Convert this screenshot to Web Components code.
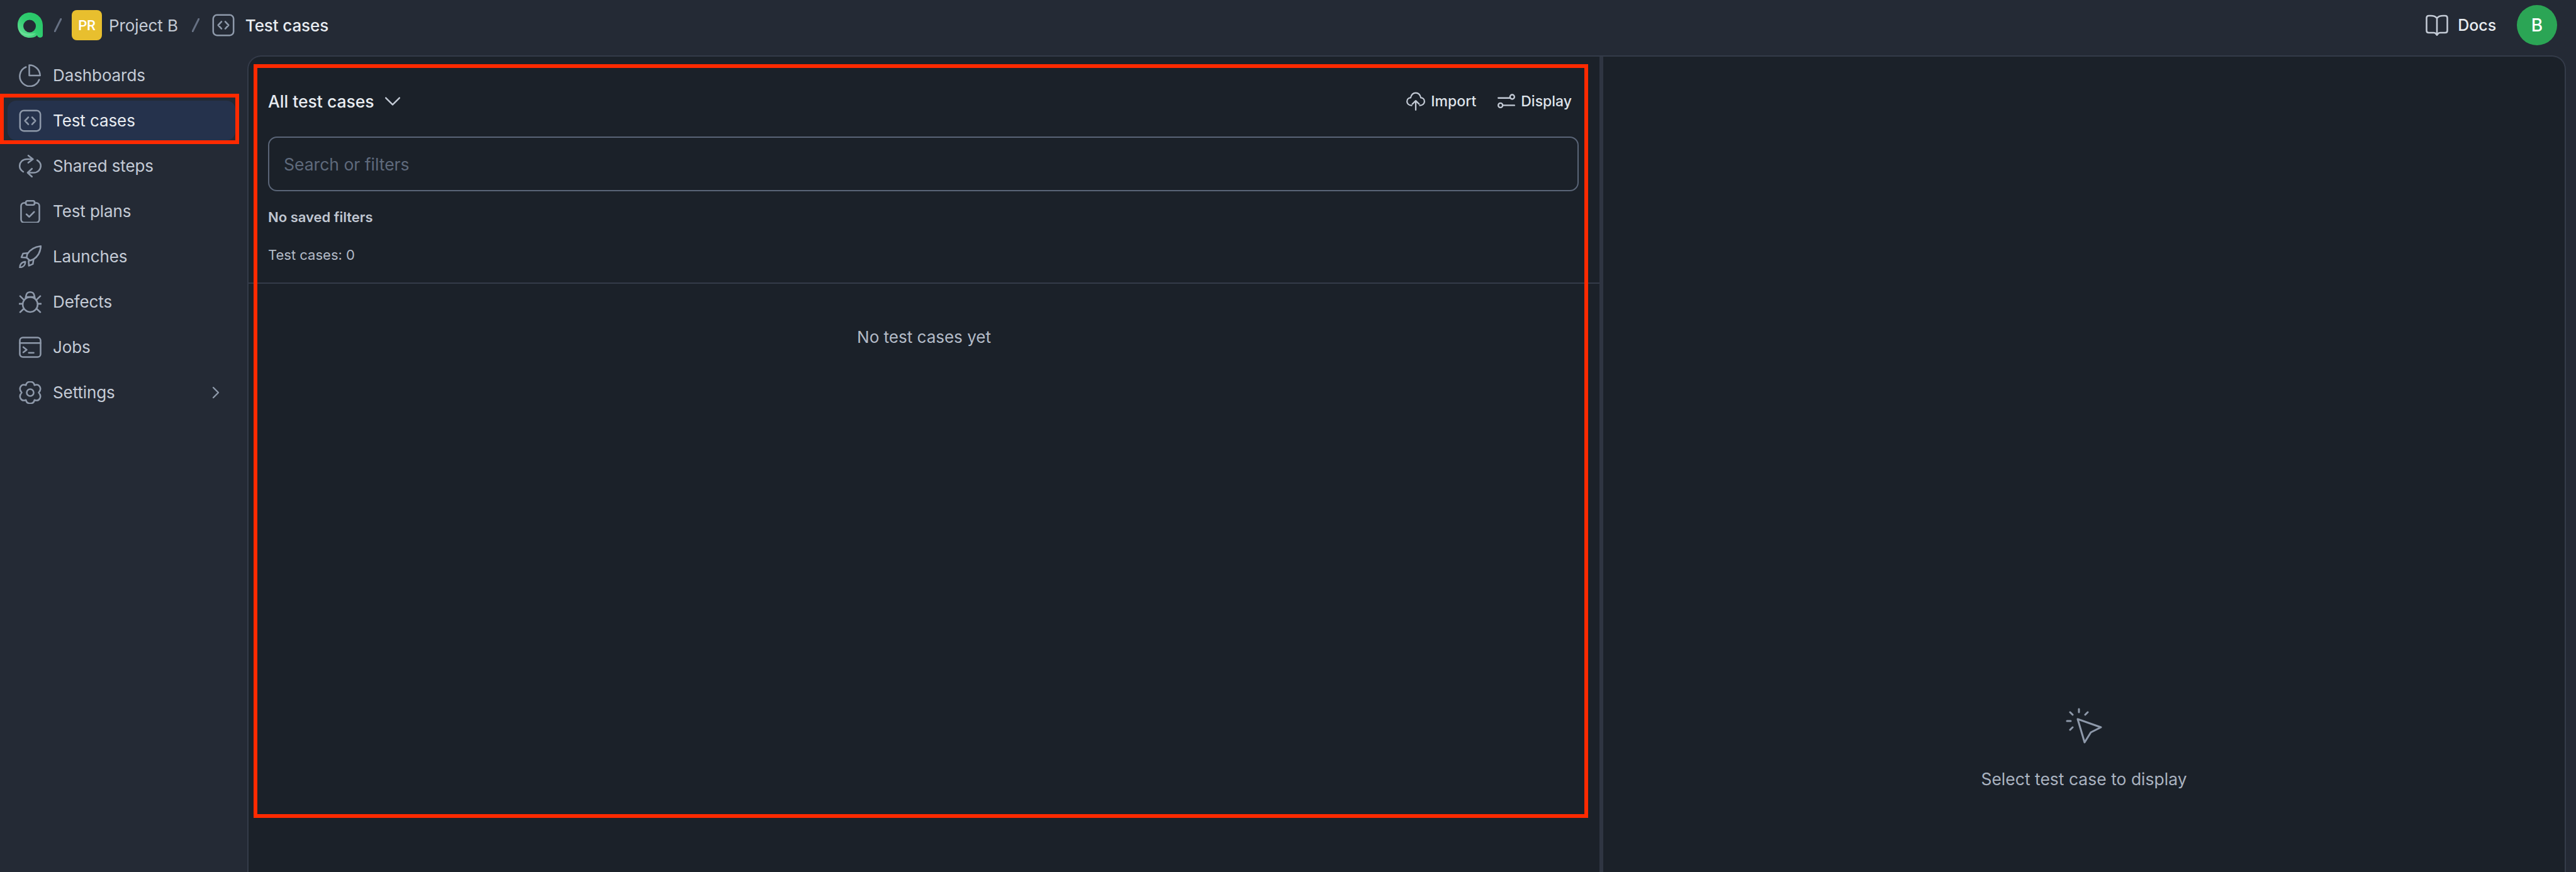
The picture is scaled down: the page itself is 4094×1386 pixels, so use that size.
<!DOCTYPE html>
<html lang="en">
<head>
<meta charset="utf-8">
<title>Test cases</title>
<style>
    html, body { margin: 0; height: 100%; background: #242a35; overflow: hidden; }
    body { font-family: Inter, "Noto Sans", sans-serif; }
</style>
</head>
<body>
<app-shell>
    <top-bar slot="top"></top-bar>
    <side-nav slot="side"></side-nav>
    <list-pane slot="list"></list-pane>
    <detail-pane slot="detail"></detail-pane>
</app-shell>

<script>
const ICONS = {
    code: '<rect x="1.2" y="1.2" width="21.6" height="21.6" rx="4"/><path d="M10 8.3 6.5 12l3.5 3.7M14 8.3l3.5 3.7-3.5 3.7"/>',
    pie: '<path d="M11 1v11h11.5A11.5 11.5 0 0 0 11 1z"/><path d="M7.5 3A10.6 10.6 0 1 0 21.5 16.5"/>',
    steps: '<path d="M10 .8l4.9 3.8L10 8.4"/><path d="M14.6 4.6H8.5C4 4.6.8 7.8.8 12c0 2.4 1.3 4.5 3.8 6"/><path d="M13.8 14.8 9.3 19l4.5 4.2"/><path d="M9.6 19h6c4.4 0 7.6-3.1 7.6-7.3 0-2.4-1.3-4.4-3.8-5.9"/>',
    clipboard: '<path d="M7.5 3H5.5a3.2 3.2 0 0 0-3.2 3.2v14.4A3.2 3.2 0 0 0 5.5 23.8h13a3.2 3.2 0 0 0 3.2-3.2V6.2A3.2 3.2 0 0 0 18.5 3h-2"/><rect x="7.3" y=".8" width="9.4" height="4.4" rx="1.8"/><path d="M8 15l3 2.8 5.2-5.3"/>',
    rocket: '<path d="M23.3.8C16.5 1.5 12.2 4 8.8 9.3L8.2 13l3.6 3.2 3.8-1.5C20.5 11.5 22.8 7 23.3.8z"/><path d="M9 8.2 4.4 8.7 2.7 12.6l5.3.4"/><path d="M15.6 14.7 14.8 19.8 10.6 21.6 10.3 16.5"/><path d="M1 23.5C.9 20.2 3 17.5 6.8 17.3 7 20.5 4.8 23 1 23.5z"/>',
    bug: '<circle cx="12" cy="14.7" r="7.9"/><path d="M6.9 8.5 7.7 5a4.4 4.4 0 0 1 8.6 0l.8 3.5"/><path d="M7.5 6.7h9"/><path d="M.5 13.9h3.5M20 13.9h3.5M1.3 5.8l3.7 3.6M22.7 5.8 19 9.4M1.3 22.8 5 19.3M22.7 22.8 19 19.3"/>',
    terminal: '<rect x="1" y="1.7" width="22" height="20.6" rx="3.2"/><path d="M1 7.5h22"/><path d="M4.7 11.8 8.3 14.6 4.7 17.4"/><path d="M10.5 17.8h5.2"/>',
    gear: '<path d="M7.5 4.2C8 1 10 .5 12 .5s4 .5 4.5 3.7C19.5 3 21.2 4 22.2 5.8s1.300 3.500-1.200 6.200c2.500 2.700 2.200 4.400 1.200 6.200s-2.700 2.800-5.700 1.600C16 23 14 23.500 12 23.500s-4-.5-4.500-3.700C4.500 21 2.800 20 1.800 18.200S.5 14.700 3 12C.5 9.300.8 7.600 1.800 5.800S4.500 3 7.500 4.200z"/><circle cx="12" cy="12" r="3.7"/>',
    right: '<path d="M8 4l8 8-8 8"/>',
    down: '<path d="M2 7l10 10L22 7"/>',
    cloud: '<path d="M6.8 17.3C3.3 17.3.9 15 .9 12.200c0-2.600 2-4.600 4.600-4.700C6.300 3.700 8.800 1.200 12 1.200s5.700 2.500 6.500 6.300c2.600.1 4.600 2.100 4.600 4.700 0 2.800-2.400 5.100-5.900 5.100"/><path d="M12 23V11.5M7.7 15.5 12 11.3l4.300 4.200"/>',
    sliders: '<path d="M1 7.5h16.5"/><circle cx="20" cy="6" r="3"/><circle cx="4" cy="17.5" r="3"/><path d="M7 17.5h16"/>',
    book: '<path d="M12 4.6C10.5 2.7 8.500 2 5.500 2H3.400C2 2 1 3 1 4.400v13.200C1 19 2 20 3.400 20H8.500c1.200 0 2 .5 2.400 1.200l1.100 1.300 1.100-1.300c.4-.7 1.200-1.200 2.400-1.200h5.100C22 20 23 19 23 17.600V4.400C23 3 22 2 20.600 2H18.500c-3 0-5 .7-6.500 2.600zM12 4.600V21"/>'
};

class UiIcon extends HTMLElement {
    constructor() {
        super();
        const size = this.getAttribute('size') || 36;
        const stroke = this.getAttribute('stroke') || 1.7;
        this.attachShadow({ mode: 'open' });
        this.shadowRoot.innerHTML = `
            <style>
                :host { display: inline-flex; flex: none; width: ${size}px; height: ${size}px; color: #8e99aa; }
                svg { width: 100%; height: 100%; }
            </style>
            <svg viewBox="0 0 24 24" fill="none" stroke="currentColor" stroke-width="${stroke}"
                stroke-linecap="round" stroke-linejoin="round">${ICONS[this.getAttribute('name')] || ''}</svg>
        `;
    }
}

// red annotation frame drawn on top of the screenshot
class MarkBox extends HTMLElement {
    constructor() {
        super();
        this.attachShadow({ mode: 'open' });
        this.shadowRoot.innerHTML = `
            <style>
                :host {
                    position: absolute;
                    box-sizing: border-box;
                    border: 6px solid #ff2a00;
                    pointer-events: none;
                }
            </style>
        `;
    }
}

class AppShell extends HTMLElement {
    constructor() {
        super();
        this.attachShadow({ mode: 'open' });
        this.shadowRoot.innerHTML = `
            <style>
                :host {
                    display: grid;
                    position: relative;
                    height: 100vh;
                    grid-template-columns: 393px 1fr;
                    grid-template-rows: 88px 1fr;
                }
                .top { grid-column: 1 / 3; }
                .panel {
                    display: grid;
                    grid-template-columns: 2153px 1fr;
                    margin-right: 16px;
                    min-height: 0;
                    background: #1b2129;
                    border: 2px solid #343b49;
                    border-bottom: none;
                    border-radius: 22px 22px 0 0;
                }
                .list { border-right: 6px solid #2f3542; min-width: 0; }
                .frame-nav { left: 0; top: 149px; width: 380px; height: 80px; }
                .frame-list { left: 403px; top: 102px; width: 2121px; height: 1198px; }
            </style>
            <div class="top"><slot name="top"></slot></div>
            <div><slot name="side"></slot></div>
            <div class="panel">
                <div class="list"><slot name="list"></slot></div>
                <slot name="detail"></slot>
            </div>
            <mark-box class="frame-nav"></mark-box>
            <mark-box class="frame-list"></mark-box>
        `;
    }
}

class TopBar extends HTMLElement {
    constructor() {
        super();
        this.attachShadow({ mode: 'open' });
        this.shadowRoot.innerHTML = `
            <style>
                :host {
                    display: flex;
                    align-items: center;
                    height: 80px;
                    padding: 0 30px 8px 28px;
                    font-size: 26px;
                    letter-spacing: -.1px;
                    color: #c4cbd6;
                }
                .logo { width: 40px; height: 40px; flex: none; }
                .slash { width: 12px; height: 22px; flex: none; margin: 0 16px 0 18px; }
                .slash.second { margin-right: 20px; }
                .badge {
                    display: flex;
                    align-items: center;
                    justify-content: center;
                    width: 48px;
                    height: 48px;
                    margin-right: 11px;
                    border-radius: 8px;
                    background: #e8bf2e;
                    color: #fff;
                    font: 500 22px Roboto, sans-serif;
                }
                .project { margin-right: 4px; }
                .here { color: #e8ecf1; font-weight: 500; margin-left: 17px; }
                .docs { margin-left: auto; display: flex; align-items: center; gap: 15px; font-size: 25px; color: #e8ecf1; font-weight: 500; }
                .docs ui-icon { color: #c4cbd6; }
                .avatar {
                    display: flex;
                    align-items: center;
                    justify-content: center;
                    width: 64px;
                    height: 64px;
                    margin-left: 33px;
                    border-radius: 50%;
                    background: #2ba555;
                    color: #fff;
                    font: 500 28px Inter, sans-serif;
                }
            </style>
            <svg class="logo" viewBox="0 0 40 40">
                <defs>
                    <linearGradient id="lg" x1="0" y1="1" x2="1" y2="0">
                        <stop offset="0" stop-color="#6fe29b"/>
                        <stop offset=".5" stop-color="#2fcb6f"/>
                        <stop offset="1" stop-color="#27c465"/>
                    </linearGradient>
                </defs>
                <path fill="url(#lg)" fill-rule="evenodd" d="M0 20C0 9 8 0 19 0c12 0 21 9 21 20v16c0 5-8 5-9 0-3 3-7 4-12 4C8 40 0 31 0 20zM19 11.5a10 10 0 1 0 .1 20 10 10 0 0 0-.1-20z"/>
                <path fill="#7ce6a5" opacity=".55" d="M1 25c2 7 9 12 17 12 4 0 8-1 11-4-3 0-6 .5-10 .5C10 33.5 4 31 1 25z"/>
            </svg>
            <svg class="slash" viewBox="0 0 12 22"><path d="M11 1 1 21" stroke="#667083" stroke-width="3" stroke-linecap="round"/></svg>
            <span class="badge">PR</span>
            <span class="project">Project B</span>
            <svg class="slash second" viewBox="0 0 12 22"><path d="M11 1 1 21" stroke="#667083" stroke-width="3" stroke-linecap="round"/></svg>
            <ui-icon name="code"></ui-icon>
            <span class="here">Test cases</span>
            <div class="docs"><ui-icon name="book"></ui-icon><span>Docs</span></div>
            <span class="avatar">B</span>
        `;
    }
}

class NavItem extends HTMLElement {
    constructor() {
        super();
        this.attachShadow({ mode: 'open' });
        this.shadowRoot.innerHTML = `
            <style>
                :host {
                    display: flex;
                    align-items: center;
                    gap: 18px;
                    height: 63px;
                    padding: 0 19px 0 18px;
                    border-radius: 14px;
                    font-size: 26px;
                    letter-spacing: -.1px;
                    color: #c4cbd6;
                }
                :host([active]) { background: #25324c; color: #e8ecf1; }
                .label { flex: 1; }
                .more { display: none; }
                :host([more]) .more { display: inline-flex; color: #8e99aa; }
            </style>
            <ui-icon name="${this.getAttribute('icon')}"></ui-icon>
            <span class="label"><slot></slot></span>
            <ui-icon class="more" name="right" size="24" stroke="2.4"></ui-icon>
        `;
    }
}

class SideNav extends HTMLElement {
    constructor() {
        super();
        this.attachShadow({ mode: 'open' });
        this.shadowRoot.innerHTML = `
            <style>
                :host { display: flex; flex-direction: column; gap: 9px; padding: 0 19px 0 12px; }
            </style>
            <nav-item icon="pie">Dashboards</nav-item>
            <nav-item icon="code" active>Test cases</nav-item>
            <nav-item icon="steps">Shared steps</nav-item>
            <nav-item icon="clipboard">Test plans</nav-item>
            <nav-item icon="rocket">Launches</nav-item>
            <nav-item icon="bug">Defects</nav-item>
            <nav-item icon="terminal">Jobs</nav-item>
            <nav-item icon="gear" more>Settings</nav-item>
        `;
    }
}

class ListPane extends HTMLElement {
    constructor() {
        super();
        this.attachShadow({ mode: 'open' });
        this.shadowRoot.innerHTML = `
            <style>
                :host { display: block; font-size: 26px; color: #c4cbd6; }
                .head {
                    display: flex;
                    align-items: center;
                    height: 50px;
                    padding: 46px 44px 31px 31px;
                }
                .title { color: #e8ecf1; font-weight: 500; font-size: 26.5px; }
                .head .chev { margin-left: 16px; color: #c4cbd6; }
                .action {
                    display: flex;
                    align-items: center;
                    gap: 9px;
                    color: #dfe3ea;
                    font-size: 23px;
                    font-weight: 500;
                }
                .action ui-icon { color: #c4cbd6; }
                .import { margin-left: auto; margin-right: 34px; }
                .search {
                    box-sizing: border-box;
                    height: 87px;
                    margin: 0 33px 0 31px;
                    padding: 0 23px;
                    display: flex;
                    align-items: center;
                    border: 2px solid #5a6577;
                    border-radius: 14px;
                    color: #5f6a7c;
                    font-size: 26.5px;
                }
                .saved { margin: 21px 0 0 31px; line-height: 40px; font-size: 22px; font-weight: 600; color: #c0c7d2; }
                .count { margin: 20px 0 0 31px; line-height: 40px; font-size: 22px; color: #b3bbc7; }
                .line { height: 2px; margin-top: 24px; background: #343b49; }
                .empty { padding-top: 65px; line-height: 40px; text-align: center; color: #b3bbc7; }
            </style>
            <div class="head">
                <span class="title">All test cases</span>
                <ui-icon class="chev" name="down" size="26" stroke="2.2"></ui-icon>
                <span class="action import"><ui-icon name="cloud" size="30" stroke="1.8"></ui-icon>Import</span>
                <span class="action"><ui-icon name="sliders" size="28" stroke="2"></ui-icon>Display</span>
            </div>
            <div class="search">Search or filters</div>
            <div class="saved">No saved filters</div>
            <div class="count">Test cases: 0</div>
            <div class="line"></div>
            <div class="empty">No test cases yet</div>
        `;
    }
}

class DetailPane extends HTMLElement {
    constructor() {
        super();
        this.attachShadow({ mode: 'open' });
        this.shadowRoot.innerHTML = `
            <style>
                :host {
                    display: flex;
                    flex-direction: column;
                    align-items: center;
                    justify-content: flex-end;
                    padding-bottom: 128px;
                    font-size: 26.5px;
                    line-height: 40px;
                    color: #aab3c0;
                }
                svg { width: 58px; height: 58px; margin-bottom: 36px; }
            </style>
            <svg viewBox="0 0 58 58" fill="none" stroke="#8e99aa" stroke-width="3" stroke-linecap="round" stroke-linejoin="round">
                <path d="M19 19 56 32 40 40 30 56z"/>
                <path d="M21 3v5M7 8l4 4M35 8l-4 4M2 22h6M7 36l4-4"/>
            </svg>
            <span>Select test case to display</span>
        `;
    }
}

customElements.define('ui-icon', UiIcon);
customElements.define('mark-box', MarkBox);
customElements.define('nav-item', NavItem);
customElements.define('side-nav', SideNav);
customElements.define('top-bar', TopBar);
customElements.define('list-pane', ListPane);
customElements.define('detail-pane', DetailPane);
customElements.define('app-shell', AppShell);
</script>
</body>
</html>
